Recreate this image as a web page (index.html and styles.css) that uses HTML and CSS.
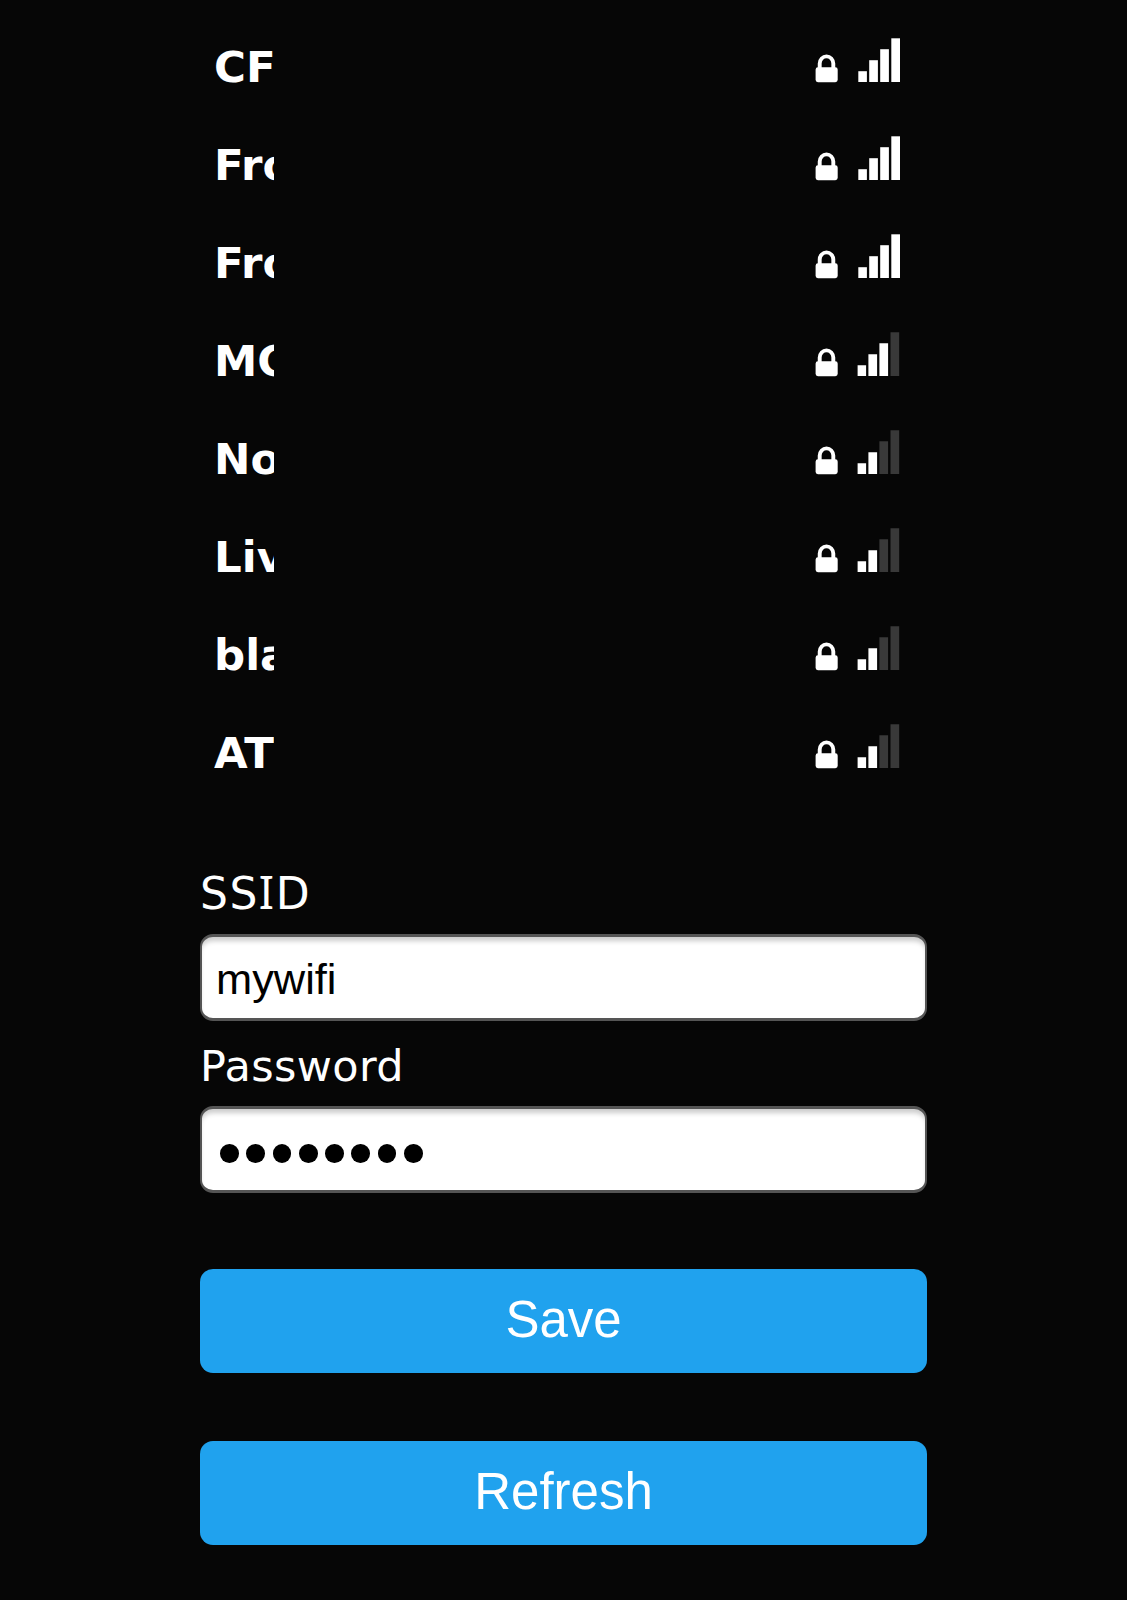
FILE: index.html
```html
<!DOCTYPE html>
<html lang="en">
<head>
<meta charset="utf-8">
<title>WiFi setup</title>
<link rel="stylesheet" href="styles.css">
</head>
<body>
<svg width="0" height="0" class="defs">
  <symbol id="lock" viewBox="0 0 23 58">
    <path d="M4.7 31V25.6a6.8 7.2 0 0 1 13.6 0V31" fill="none" stroke="#fff" stroke-width="3.9"/>
    <rect x="0.6" y="29.3" width="22.1" height="14.9" rx="2.4" fill="#fff"/>
  </symbol>
  <symbol id="bars" viewBox="0 0 43 58">
    <path class="b1" d="M0.3 33.2h8.6v10.8H0.3z"/>
    <path class="b2" d="M11.2 22.2h8.7V44h-8.7z"/>
    <path class="b3" d="M22.2 11.2h8.7V44h-8.7z"/>
    <path class="b4" d="M33.3 0.3H42V44h-8.7z"/>
  </symbol>
</svg>
<main class="page">
  <ul class="networks">
    <li class="network"><span class="name">CF</span><svg class="lock"><use href="#lock"/></svg><svg class="signal s4"><use href="#bars"/></svg></li>
    <li class="network"><span class="name">Fro</span><svg class="lock"><use href="#lock"/></svg><svg class="signal s4"><use href="#bars"/></svg></li>
    <li class="network"><span class="name">Fro</span><svg class="lock"><use href="#lock"/></svg><svg class="signal s4"><use href="#bars"/></svg></li>
    <li class="network"><span class="name">MC</span><svg class="lock"><use href="#lock"/></svg><svg class="signal s3"><use href="#bars"/></svg></li>
    <li class="network"><span class="name">No</span><svg class="lock"><use href="#lock"/></svg><svg class="signal s2"><use href="#bars"/></svg></li>
    <li class="network"><span class="name">Liv</span><svg class="lock"><use href="#lock"/></svg><svg class="signal s2"><use href="#bars"/></svg></li>
    <li class="network"><span class="name">bla</span><svg class="lock"><use href="#lock"/></svg><svg class="signal s2"><use href="#bars"/></svg></li>
    <li class="network"><span class="name">AT</span><svg class="lock"><use href="#lock"/></svg><svg class="signal s2"><use href="#bars"/></svg></li>
  </ul>
  <form class="form">
    <div class="label ssid">SS<span class="serif-i">I</span>D</div>
    <div class="field">mywifi</div>
    <div class="label">Password</div>
    <div class="field dots"><i></i><i></i><i></i><i></i><i></i><i></i><i></i><i></i></div>
    <button class="button" type="button">Save</button>
    <button class="button" type="button">Refresh</button>
  </form>
</main>
</body>
</html>
```
FILE: styles.css
```css
* { box-sizing: border-box; }
body { margin: 0; background: #060606; color: #fff; font-family: "DejaVu Sans", Verdana, sans-serif; }
.defs { display: block; height: 0; }
.page { width: 727px; height: 1600px; margin: 0 auto; padding-top: 18px; overflow: hidden; }
.networks { list-style: none; margin: 0; padding: 0 26px 0 14px; }
.network { display: flex; align-items: center; height: 98px; }
.name { width: 60px; margin-right: auto; overflow: hidden; white-space: nowrap; font-weight: bold; font-size: 43.5px; line-height: 60px; }
.lock { width: 23px; height: 58px; margin-right: 20px; }
.signal { width: 43px; height: 58px; fill: #fff; --b3: #fff; --b4: #fff; }
.b3 { fill: var(--b3); }
.b4 { fill: var(--b4); }
.s3 { --b4: #393939; }
.s2 { --b3: #393939; --b4: #393939; }
.s3, .s2 { transform: translateX(-0.8px); }
.form { display: flex; flex-direction: column; padding-top: 67px; }
.label { height: 50px; line-height: 50px; font-size: 43px; margin-bottom: 15px; letter-spacing: 0.4px; }
.ssid { letter-spacing: 1.5px; font-size: 44px; }
.serif-i { font-family: "Noto Sans", sans-serif; font-size: 45px; line-height: 1; }
.field { display: flex; align-items: center; height: 87px; margin-bottom: 20px; padding: 3px 14px 0; border: 3px solid #555; border-width: 3px 2px; border-radius: 13px; background: #fff; color: #000; font: 43.4px/80px "Liberation Sans", Arial, sans-serif; box-shadow: inset 0 6px 5px -2px #ccc; }
.dots { gap: 7.6px; padding: 8px 18px 0; margin-bottom: 76px; }
.dots i { width: 18.7px; height: 18.7px; border-radius: 50%; background: #000; }
.button { height: 104px; margin: 0 0 68px; padding: 0 0 2px; border: 0; border-radius: 13px; background: #20a2ee; color: #fff; font: 51px/102px "Liberation Sans", Arial, sans-serif; }
```
